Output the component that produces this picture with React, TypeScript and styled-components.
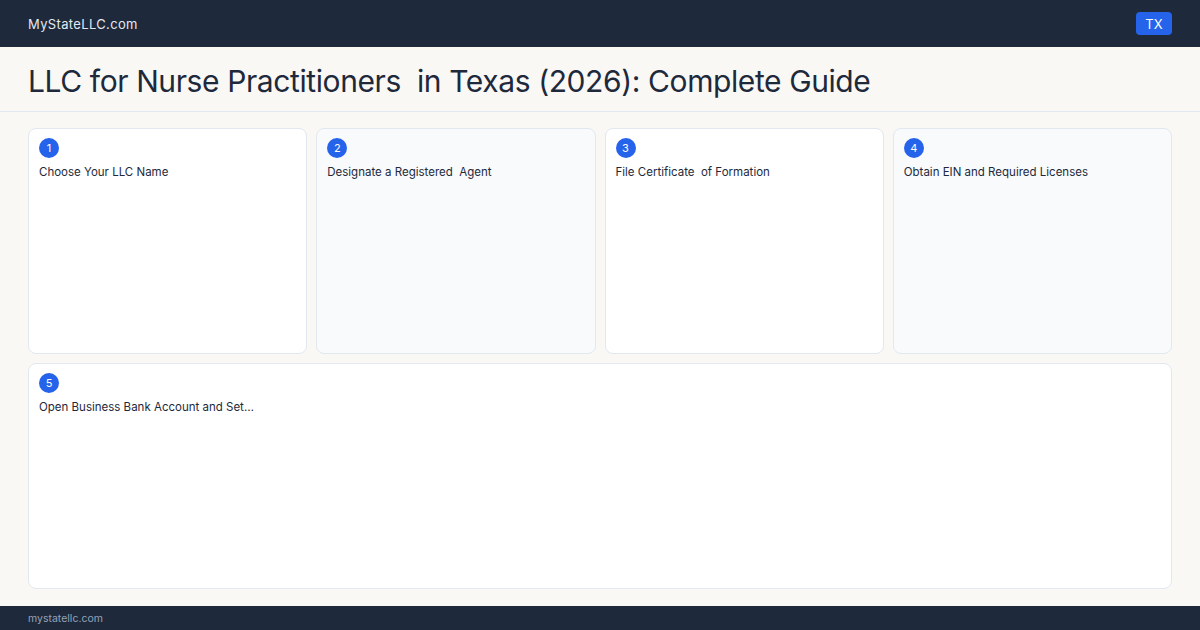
import styled, {createGlobalStyle} from "styled-components";

const GlobalStyle = createGlobalStyle`
  html, body {
    margin: 0;
    padding: 0;
    width: 1200px;
    height: 630px;
    overflow: hidden;
    background: #f9f8f5;
    font-family: Inter, "Noto Sans", sans-serif;
  }
  * { box-sizing: border-box; }
`

const Page = styled.div`
  width: 1200px;
  height: 630px;
  display: flex;
  flex-direction: column;
`
const TopBar = styled.header`
  height: 47px;
  flex-shrink: 0;
  background: #1e293b;
  display: flex;
  align-items: center;
  justify-content: space-between;
  padding: 0 28px;
`
const Brand = styled.div`
  color: #e2e8f0;
  font-size: 13px;
  letter-spacing: 0.35px;
`
const StateBadge = styled.div`
  background: #2563eb;
  color: #fff;
  font-size: 13px;
  height: 23px;
  width: 36px;
  border-radius: 4px;
  display: flex;
  align-items: center;
  justify-content: center;
`
const TitleBar = styled.div`
  height: 65px;
  flex-shrink: 0;
  border-bottom: 1px solid #e2e8f0;
  display: flex;
  align-items: center;
  padding: 4px 28px 0;
`
const Title = styled.h1`
  margin: 0;
  font-size: 30px;
  font-weight: 400;
  color: #1e293b;
  white-space: pre;
  letter-spacing: -0.4px;
`
const Steps = styled.main`
  flex: 1;
  padding: 16px 28px 17px;
  display: grid;
  grid-template-columns: repeat(4, 1fr);
  grid-template-rows: repeat(2, 1fr);
  gap: 9px;
`
const Card = styled.div<{ $alt?: boolean; $wide?: boolean }>`
  background: ${p => p.$alt ? "#f8fafc" : "#fff"};
  border: 1px solid #e2e8f0;
  border-radius: 8px;
  padding: 9px 10px;
  grid-column: ${p => p.$wide ? "1 / -1" : "auto"};
`
const Num = styled.div`
  width: 20px;
  height: 20px;
  border-radius: 50%;
  background: #2563eb;
  color: #fff;
  font-size: 11px;
  display: flex;
  align-items: center;
  justify-content: center;
`
const StepText = styled.div`
  margin-top: 7px;
  font-size: 11.5px;
  color: #1e293b;
  white-space: pre;
`
const Footer = styled.footer`
  height: 24px;
  flex-shrink: 0;
  background: #1e293b;
  color: #94a3b8;
  font-size: 10.5px;
  display: flex;
  align-items: center;
  padding: 0 28px;
`

const steps = [
    "Choose Your LLC Name",
    "Designate a Registered  Agent",
    "File Certificate  of Formation",
    "Obtain EIN and Required Licenses",
    "Open Business Bank Account and Set…",
];

export default function App() {
    return (
        <Page>
            <GlobalStyle/>
            <TopBar>
                <Brand>MyStateLLC.com</Brand>
                <StateBadge>TX</StateBadge>
            </TopBar>
            <TitleBar>
                <Title>LLC for Nurse Practitioners  in Texas (2026): Complete Guide</Title>
            </TitleBar>
            <Steps>
                {steps.map((s, i) => (
                    <Card key={i} $alt={i % 2 === 1} $wide={i === 4}>
                        <Num>{i + 1}</Num>
                        <StepText>{s}</StepText>
                    </Card>
                ))}
            </Steps>
            <Footer>mystatellc.com</Footer>
        </Page>
    )
}
